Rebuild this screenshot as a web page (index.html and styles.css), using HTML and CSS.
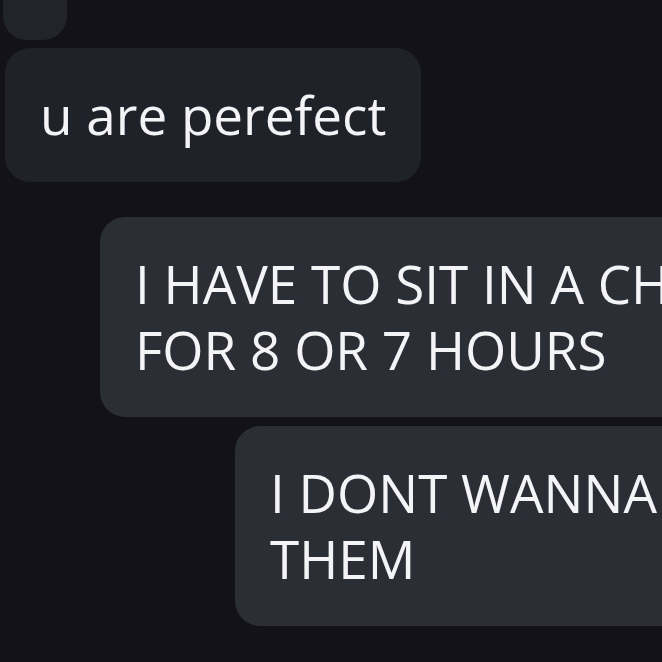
FILE: index.html
```html
<!DOCTYPE html>
<html lang="en">
<head>
    <meta charset="UTF-8">
    <meta name="viewport" content="width=device-width, initial-scale=1.0">
    <title>Chat</title>
    <link rel="stylesheet" href="styles.css">
</head>
<body>
    <div class="chat">
        <div class="stub"></div>
        <div class="bubble dim">u are perefect</div>
        <div class="bubble mine first">I HAVE TO SIT IN A CHAIR<br>FOR 8 OR 7 HOURS</div>
        <div class="bubble mine second">I DONT WANNA SIT WITH<br>THEM</div>
    </div>
</body>
</html>
```

FILE: styles.css
```css
body {
    margin: 0;
    background-color: #121218;
    overflow: hidden;
    font-family: "Open Sans", Lato, sans-serif;
}
.chat {
    display: flex;
    flex-direction: column;
    align-items: flex-start;
    width: 662px;
    height: 662px;
    overflow: hidden;
}
.stub {
    width: 64px;
    height: 40px;
    margin-left: 3px;
    background-color: #22242b;
    border-radius: 0 0 24px 24px;
}
.bubble {
    flex-shrink: 0;
    white-space: nowrap;
    color: #f4f4f6;
    font-size: 53px;
    line-height: 66px;
    padding: 34px 35px;
    border-radius: 25px;
    background-color: #2b2e35;
}
.dim {
    margin-top: 8px;
    margin-left: 5px;
    background-color: #20222a;
}
.first {
    margin-top: 35px;
    margin-left: 100px;
}
.second {
    margin-top: 9px;
    margin-left: 235px;
}
```
